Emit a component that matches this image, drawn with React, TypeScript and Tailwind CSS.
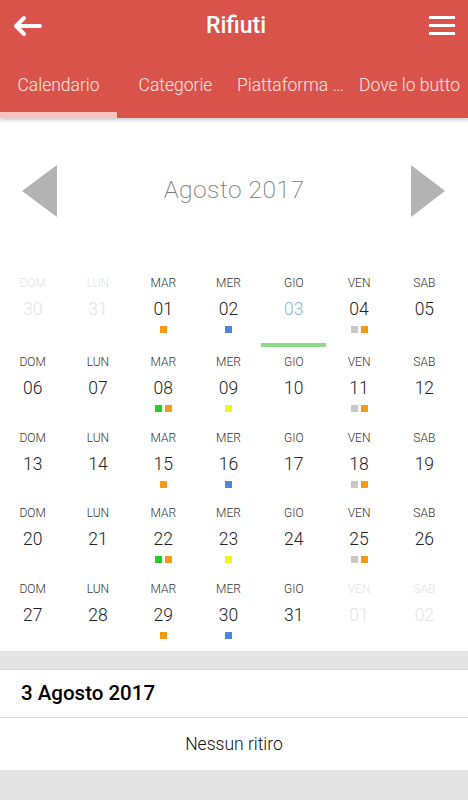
import React from "react";

type Day = {
  name: string;
  num: string;
  faded?: boolean;
  selected?: boolean;
  dots?: readonly string[];
};

const O = "bg-[#f39a17]";
const B = "bg-[#4a86e0]";
const G = "bg-[#c8c8c8]";
const GR = "bg-[#1fd21f]";
const Y = "bg-[#f5f21c]";

const names = ["DOM", "LUN", "MAR", "MER", "GIO", "VEN", "SAB"];

const dotsByDay: Record<string, readonly string[]> = {
  "01": [O],
  "02": [B],
  "04": [G, O],
  "08": [GR, O],
  "09": [Y],
  "11": [G, O],
  "15": [O],
  "16": [B],
  "18": [G, O],
  "22": [GR, O],
  "23": [Y],
  "25": [G, O],
  "29": [O],
  "30": [B]
};

const pad = (n: number) => (n < 10 ? `0${n}` : `${n}`);

function buildWeeks(): Day[][] {
  const cells: Day[] = [];
  cells.push({ name: "DOM", num: "30", faded: true }, { name: "LUN", num: "31", faded: true });
  for (let d = 1; d <= 31; d++) {
    const num = pad(d);
    cells.push({ name: names[cells.length % 7], num, selected: d === 3, dots: dotsByDay[num] });
  }
  cells.push({ name: "VEN", num: "01", faded: true }, { name: "SAB", num: "02", faded: true });
  const weeks: Day[][] = [];
  for (let i = 0; i < cells.length; i += 7) weeks.push(cells.slice(i, i + 7));
  return weeks;
}

const weeks = buildWeeks();
const rowHeights = ["h-[79px]", "h-[76px]", "h-[75px]", "h-[76px]", "h-[69px]"];

const tabs = ["Calendario", "Categorie", "Piattaforma ecologica", "Dove lo butto"];

export default function App() {
  return (
    <div className="min-h-screen bg-white font-['Roboto',sans-serif]">
      <header className="relative z-10 bg-[#d9534b] shadow-[0_2px_4px_rgba(0,0,0,0.22)]">
        <div className="flex h-[52px] items-center justify-between pl-[13px] pr-[13px]">
          <svg width="30" height="22" viewBox="0 0 30 22" fill="none" stroke="white" strokeWidth="4" strokeLinecap="round" strokeLinejoin="round">
            <path d="M27 11H4M11 3L3 11l8 8" />
          </svg>
          <span className="text-[23px] font-medium text-white">Rifiuti</span>
          <svg width="26" height="22" viewBox="0 0 26 22" fill="white">
            <rect x="0" y="1" width="26" height="3" />
            <rect x="0" y="9" width="26" height="3" />
            <rect x="0" y="17" width="26" height="3" />
          </svg>
        </div>
        <nav className="grid h-[66px] grid-cols-4">
          {tabs.map((t, i) => (
            <div key={t} className="relative flex min-w-0 items-center justify-center px-[3px]">
              <span className="truncate text-[17.5px] font-light text-white/85">{t}</span>
              {i === 0 ? <span className="absolute inset-x-0 bottom-0 h-[6px] bg-[#f6c3c0]" /> : null}
            </div>
          ))}
        </nav>
      </header>

      <main>
        <div className="mt-[46px] flex h-[53px] items-center justify-between px-[22px]">
          <svg width="36" height="52" viewBox="0 0 36 52">
            <polygon points="0,26 35,0 35,52" fill="#b3b3b3" />
          </svg>
          <span className="text-[24.5px] font-extralight tracking-[0.5px] text-[#7a7a7a]">Agosto 2017</span>
          <svg width="36" height="52" viewBox="0 0 36 52">
            <polygon points="1,0 35,26 1,52" fill="#b3b3b3" />
          </svg>
        </div>

        <div className="mt-[59px] w-[457px]">
          {weeks.map((week, wi) => (
            <div key={wi} className={`grid grid-cols-7 ${rowHeights[wi]}`}>
              {week.map((d, di) => (
                <div key={di} className="flex flex-col items-center">
                  <span className={`text-[12px] font-light leading-[14px] ${d.faded ? "text-[#e2e2e2]" : "text-[#333]"}`}>{d.name}</span>
                  <span
                    className={`mt-[8px] text-[17.5px] font-light leading-[22px] ${
                      d.faded ? "text-[#e2e2e2]" : d.selected ? "text-[#8fb6cb]" : "text-[#222]"
                    }`}
                  >
                    {d.num}
                  </span>
                  <div className="mt-[5.5px] flex h-[7px] gap-[3px]">
                    {(d.dots ?? []).map((c, k) => (
                      <span key={k} className={`h-[7px] w-[7px] ${c}`} />
                    ))}
                  </div>
                  <div className={`mt-[10.5px] h-[4px] w-full ${d.selected ? "bg-[#8edc8a]" : ""}`} />
                </div>
              ))}
            </div>
          ))}
        </div>

        <div className="h-[19px] border-b border-[#d8d8d8] bg-[#e4e4e4]" />
        <div className="flex h-[48px] items-center border-b border-[#dadada] px-[21px]">
          <span className="text-[20.5px] font-medium text-black">3 Agosto 2017</span>
        </div>
        <div className="flex h-[52px] items-center justify-center">
          <span className="text-[17.5px] font-light text-[#111]">Nessun ritiro</span>
        </div>
        <div className="h-[40px] bg-[#e4e4e4]" />
      </main>
    </div>
  );
}
